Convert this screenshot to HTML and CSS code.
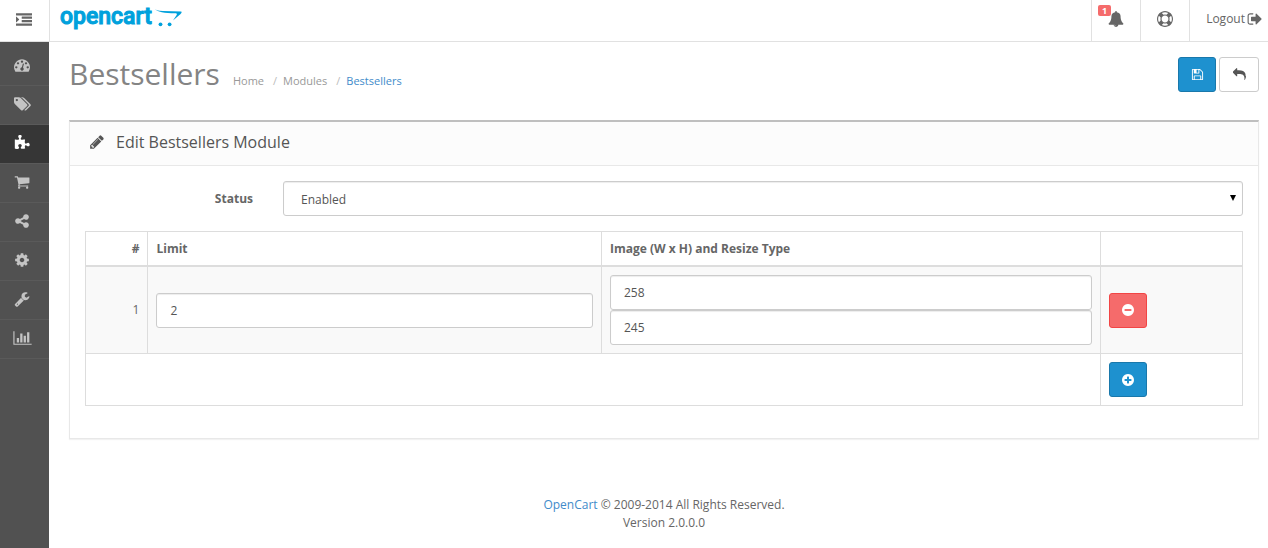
FILE: index.html
```html
<!DOCTYPE html>
<html lang="en">
<head>
<meta charset="utf-8">
<title>Bestsellers</title>
<link rel="stylesheet" href="styles.css">
</head>
<body>
<header class="topbar">
  <button class="menu-toggle" type="button" aria-label="Toggle menu"><svg class="icon icon-16" viewBox="0 0 1792 1792"><path d="M352 832q0 14-9 23l-288 288q-9 9-23 9-13 0-22.500-9.500t-9.500-22.500v-576q0-13 9.500-22.500t22.500-9.500q14 0 23 9l288 288q9 9 9 23zm1440 480v192q0 13-9.500 22.500t-22.500 9.500h-1728q-13 0-22.500-9.500t-9.500-22.500v-192q0-13 9.500-22.500t22.500-9.500h1728q13 0 22.500 9.500t9.500 22.500zm0-384v192q0 13-9.500 22.500t-22.500 9.500h-1088q-13 0-22.500-9.500t-9.500-22.500v-192q0-13 9.500-22.500t22.500-9.500h1088q13 0 22.500 9.500t9.500 22.500zm0-384v192q0 13-9.500 22.500t-22.500 9.500h-1088q-13 0-22.500-9.500t-9.500-22.500v-192q0-13 9.500-22.500t22.500-9.500h1088q13 0 22.500 9.500t9.500 22.500zm0-384v192q0 13-9.500 22.500t-22.500 9.500h-1728q-13 0-22.500-9.500t-9.500-22.500v-192q0-13 9.500-22.500t22.500-9.500h1728q13 0 22.500 9.500t9.500 22.500z"/></svg></button>
  <a class="logo" href="#"><span class="logo-text">opencart</span><svg class="logo-cart" viewBox="0 0 28 20"><path d="M0 0C1 2 4 3 9 3L27 3.400C28.200 3.600 27.600 5 26.600 6L19 12.500L22.500 7.200C23.300 5.600 23 5.400 21 5.300C11 5 3 4.500 0 0Z"/><circle cx="6.500" cy="16.300" r="1.900"/><circle cx="15.600" cy="16.300" r="1.900"/></svg></a>
  <nav class="top-actions" aria-label="Account">
    <a class="top-action" href="#" aria-label="Notifications"><span class="badge">1</span><svg class="icon icon-16" viewBox="0 0 1792 1792"><path d="M912 1696q0-16-16-16-59 0-101.500-42.500t-42.500-101.500q0-16-16-16t-16 16q0 73 51.500 124.500t124.500 51.500q16 0 16-16zm816-288q0 52-38 90t-90 38h-448q0 106-75 181t-181 75-181-75-75-181h-448q-52 0-90-38t-38-90q50-42 91-88t85-119.500 74.500-158.500 50-206 19.500-260q0-152 117-282.500t307-158.500q-8-19-8-39 0-40 28-68t68-28 68 28 28 68q0 20-8 39 190 28 307 158.500t117 282.500q0 139 19.500 260t50 206 74.500 158.500 85 119.500 91 88z"/></svg></a>
    <a class="top-action" href="#" aria-label="Help"><svg class="icon icon-16" viewBox="0 0 1792 1792"><path d="M896 0q182 0 348 71t286 191 191 286 71 348-71 348-191 286-286 191-348 71-348-71-286-191-191-286-71-348 71-348 191-286 286-191 348-71zm0 128q-190 0-361 90l194 194q82-28 167-28t167 28l194-194q-171-90-361-90zm-678 1129l194-194q-28-82-28-167t28-167l-194-194q-90 171-90 361t90 361zm678 407q190 0 361-90l-194-194q-82 28-167 28t-167-28l-194 194q171 90 361 90zm0-384q159 0 271.500-112.500t112.500-271.500-112.500-271.500-271.500-112.500-271.500 112.500-112.500 271.500 112.500 271.500 271.500 112.500zm484-217l194 194q90-171 90-361t-90-361l-194 194q28 82 28 167t-28 167z"/></svg></a>
    <a class="top-action logout" href="#">Logout <svg class="icon icon-16" viewBox="0 0 1792 1792"><path d="M704 1440q0 4 1 20t.5 26.500-3 23.500-10 19.500-20.500 6.500h-320q-119 0-203.500-84.500t-84.500-203.500v-704q0-119 84.500-203.500t203.500-84.500h320q13 0 22.500 9.500t9.500 22.500q0 4 1 20t.5 26.500-3 23.500-10 19.500-20.500 6.500h-320q-66 0-113 47t-47 113v704q0 66 47 113t113 47h312l11.500 1 11.500 3 8 5.500 7 9 2 13.500zm928-544q0 26-19 45l-544 544q-19 19-45 19t-45-19-19-45v-288h-448q-26 0-45-19t-19-45v-384q0-26 19-45t45-19h448v-288q0-26 19-45t45-19 45 19l544 544q19 19 19 45z"/></svg></a>
  </nav>
</header>
<div class="layout">
  <nav class="sidebar" aria-label="Main">
    <a class="side-link" href="#" aria-label="Dashboard"><svg class="icon icon-16" viewBox="0 0 1792 1792"><path d="M384 1152q0-53-37.500-90.500t-90.500-37.500-90.500 37.500-37.500 90.500 37.500 90.500 90.500 37.500 90.500-37.500 37.500-90.500zm192-448q0-53-37.500-90.500t-90.500-37.500-90.500 37.500-37.500 90.500 37.500 90.500 90.500 37.500 90.500-37.500 37.500-90.500zm428 481l101-382q6-26-7.500-48.500t-38.500-29.500-48 6.500-30 39.500l-101 382q-60 5-107 43.500t-63 98.500q-20 77 20 146t117 89 146-20 89-117q16-60-6-117t-72-91zm660-33q0-53-37.500-90.500t-90.500-37.500-90.500 37.500-37.500 90.500 37.500 90.500 90.500 37.500 90.500-37.500 37.500-90.500zm-640-640q0-53-37.500-90.500t-90.500-37.500-90.500 37.500-37.500 90.500 37.500 90.500 90.500 37.500 90.500-37.500 37.500-90.500zm448 192q0-53-37.500-90.500t-90.500-37.500-90.500 37.500-37.500 90.500 37.500 90.500 90.500 37.500 90.500-37.500 37.500-90.500zm320 448q0 261-141 483-19 29-54 29h-1402q-35 0-54-29-141-221-141-483 0-182 71-348t191-286 286-191 348-71 348 71 286 191 191 286 71 348z"/></svg></a>
    <a class="side-link" href="#" aria-label="Catalog"><svg class="icon icon-tags" viewBox="0 0 1920 1792"><path d="M448 448q0-53-37.500-90.500t-90.500-37.500-90.500 37.500-37.500 90.500 37.500 90.500 90.500 37.500 90.500-37.500 37.500-90.500zm1067 576q0 53-37 90l-491 492q-39 37-91 37-53 0-90-37l-715-716q-38-37-64.500-101t-26.500-117v-416q0-52 38-90t90-38h416q53 0 117 26.500t102 64.500l715 714q37 39 37 91zm384 0q0 53-37 90l-491 492q-39 37-91 37-36 0-59-14t-53-45l470-470q37-37 37-90 0-52-37-91l-715-714q-38-38-102-64.500t-117-26.500h224q53 0 117 26.500t102 64.500l715 714q37 39 37 91z"/></svg></a>
    <a class="side-link side-link-active" href="#" aria-label="Extensions"><svg class="icon icon-16" viewBox="0 0 1792 1792"><path d="M1755 1083q0 81-44.500 135t-123.500 54q-41 0-77.500-17.500t-59-38-56.500-38-71-17.500q-110 0-110 124 0 39 16 115t15 115v5q-22 0-33 1-34 3-97.500 11.500t-115.500 13.500-98 5q-61 0-103-26.500t-42-83.500q0-37 17.500-71t38-56.500 38-59 17.500-77.500q0-79-54-123.500t-135-44.500q-84 0-143 45.500t-59 127.500q0 43 15 83t33.500 64.500 33.500 53 15 50.500q0 45-46 89-37 35-117 35-95 0-245-24-9-2-27.500-4t-27.500-4l-13-2q-1 0-3-1-2 0-2-1v-1024q2 1 17.500 3.500t34 5 21.500 3.500q150 24 245 24 80 0 117-35 46-44 46-89 0-22-15-50.500t-33.500-53-33.500-64.500-15-83q0-82 59-127.500t144-45.500q80 0 134 44.500t54 123.500q0 41-17.500 77.500t-38 59-38 56.500-17.500 71q0 57 42 83.500t103 26.500q64 0 180-15t163-17v2q-1 2-3.500 17.500t-5 34-3.500 21.500q-24 150-24 245 0 80 35 117 44 46 89 46 22 0 50.500-15t53-33.500 64.500-33.500 83-15q82 0 127.500 59t45.500 143z"/></svg></a>
    <a class="side-link" href="#" aria-label="Sales"><svg class="icon icon-16" viewBox="0 0 1792 1792"><path d="M704 1536q0 52-38 90t-90 38-90-38-38-90 38-90 90-38 90 38 38 90zm896 0q0 52-38 90t-90 38-90-38-38-90 38-90 90-38 90 38 38 90zm128-1088v512q0 24-16.500 42.500t-40.500 21.500l-1044 122q13 60 13 70 0 16-24 64h920q26 0 45 19t19 45-19 45-45 19h-1024q-26 0-45-19t-19-45q0-11 8-31.500t16-36 21.500-40 15.500-29.500l-177-823h-204q-26 0-45-19t-19-45 19-45 45-19h256q16 0 28.500 6.500t19.500 15.500 13 24.500 8 26 5.500 29.500 4.500 26h1201q26 0 45 19t19 45z"/></svg></a>
    <a class="side-link" href="#" aria-label="Marketing"><svg class="icon icon-16" viewBox="0 0 1792 1792"><path d="M1344 1024q133 0 226.500 93.500t93.500 226.500-93.500 226.500-226.500 93.500-226.500-93.500-93.500-226.500q0-12 2-34l-360-180q-92 86-218 86-133 0-226.500-93.500t-93.500-226.500 93.500-226.500 226.500-93.500q126 0 218 86l360-180q-2-22-2-34 0-133 93.500-226.500t226.500-93.500 226.500 93.500 93.500 226.500-93.500 226.500-226.500 93.500q-126 0-218-86l-360 180q2 22 2 34t-2 34l360 180q92-86 218-86z"/></svg></a>
    <a class="side-link" href="#" aria-label="System"><svg class="icon icon-16" viewBox="0 0 1792 1792"><path d="M1152 896q0-106-75-181t-181-75-181 75-75 181 75 181 181 75 181-75 75-181zm512-109v222q0 12-8 23t-20 13l-185 28q-19 54-39 91 35 50 107 138 10 12 10 25t-9 23q-27 37-99 108t-94 71q-12 0-26-9l-138-108q-44 23-91 38-16 136-29 186-7 28-36 28h-222q-14 0-24.500-8.500t-11.500-21.500l-28-184q-49-16-90-37l-141 107q-10 9-25 9-14 0-25-11-126-114-165-168-7-10-7-23 0-12 8-23 15-21 51-66.500t54-70.500q-27-50-41-99l-183-27q-13-2-21-12.500t-8-23.500v-222q0-12 8-23t19-13l186-28q14-46 39-92-40-57-107-138-10-12-10-24 0-10 9-23 26-36 98.500-107.500t94.500-71.500q13 0 26 10l138 107q44-23 91-38 16-136 29-186 7-28 36-28h222q14 0 24.500 8.500t11.500 21.500l28 184q49 16 90 37l142-107q9-9 24-9 13 0 25 10 129 119 165 170 7 8 7 22 0 12-8 23-15 21-51 66.500t-54 70.500q26 50 41 98l183 28q13 2 21 12.500t8 23.500z"/></svg></a>
    <a class="side-link" href="#" aria-label="Tools"><svg class="icon icon-16" viewBox="0 0 1792 1792"><path d="M448 1472q0-26-19-45t-45-19-45 19-19 45 19 45 45 19 45-19 19-45zm644-420l-682 682q-37 37-90 37-52 0-91-37l-106-108q-38-36-38-90 0-53 38-91l681-681q39 98 114.500 173.500t173.500 114.500zm634-435q0 39-23 106-47 134-164.500 217.500t-258.500 83.500q-185 0-316.500-131.500t-131.500-316.500 131.500-316.500 316.500-131.500q58 0 121.500 16.500t107.500 46.500q16 11 16 28t-16 28l-293 169v224l193 107q5-3 79-48.500t135.500-81 70.500-35.500q15 0 23.500 10t8.500 25z"/></svg></a>
    <a class="side-link" href="#" aria-label="Reports"><svg class="icon icon-chart" viewBox="0 0 2048 1792"><path d="M640 896v512h-256v-512h256zm384-512v1024h-256v-1024h256zm1024 1152v128h-2048v-1536h128v1408h1920zm-640-896v768h-256v-768h256zm384-384v1152h-256v-1152h256z"/></svg></a>
  </nav>
  <div class="content">
    <div class="page-header">
      <h1 class="page-title">Bestsellers</h1>
      <ol class="breadcrumb">
        <li><a href="#">Home</a></li>
        <li><a href="#">Modules</a></li>
        <li><a class="current" href="#">Bestsellers</a></li>
      </ol>
      <div class="page-buttons">
        <button class="btn btn-primary" type="submit" form="module-form" aria-label="Save"><svg class="icon icon-13" viewBox="0 0 1792 1792"><path d="M512 1536h768v-384h-768v384zm896 0h128v-896q0-14-10-38.500t-20-34.500l-281-281q-10-10-34-20t-39-10v416q0 40-28 68t-68 28h-576q-40 0-68-28t-28-68v-416h-128v1280h128v-416q0-40 28-68t68-28h832q40 0 68 28t28 68v416zm-384-928v-320q0-13-9.500-22.500t-22.500-9.500h-192q-13 0-22.500 9.500t-9.500 22.500v320q0 13 9.500 22.500t22.500 9.500h192q13 0 22.500-9.500t9.500-22.500zm640 32v928q0 40-28 68t-68 28h-1344q-40 0-68-28t-28-68v-1344q0-40 28-68t68-28h928q40 0 88 20t76 48l280 280q28 28 48 76t20 88z"/></svg></button>
        <a class="btn btn-default" href="#" aria-label="Cancel"><svg class="icon icon-13" viewBox="0 0 1792 1792"><path d="M1792 1120q0 166-127 451-3 7-10.500 24t-13.500 30-13 22q-12 17-28 17-15 0-23.500-10t-8.500-25q0-9 2.500-26.500t2.500-23.500q5-68 5-123 0-112-19.500-200.500t-54-153.500-89-112-117-78.500-144-49-164-24-185.500-7.500h-224v256q0 26-19 45t-45 19-45-19l-512-512q-19-19-19-45t19-45l512-512q19-19 45-19t45 19 19 45v256h224q713 0 875 403 53 134 53 333z"/></svg></a>
      </div>
    </div>
    <section class="panel">
      <h2 class="panel-heading"><svg class="icon icon-16" viewBox="0 0 1792 1792"><path d="M491 1536l91-91-235-235-91 91v107h128v128h107zm523-928q0-22-22-22-10 0-17 7l-542 542q-7 7-7 17 0 22 22 22 10 0 17-7l542-542q7-7 7-17zm-54-192l416 416-832 832h-416v-416zm683 96q0 53-37 90l-166 166-416-416 166-165q36-38 90-38 53 0 91 38l235 234q37 39 37 91z"/></svg><span>Edit Bestsellers Module</span></h2>
      <form class="panel-body" id="module-form">
        <div class="form-row">
          <label class="form-label" for="status">Status</label>
          <div class="select-wrap">
            <select class="field" id="status"><option selected>Enabled</option><option>Disabled</option></select>
            <svg class="select-arrow" viewBox="0 0 6 6"><path d="M0 0H6L3 6Z"/></svg>
          </div>
        </div>
        <table class="table">
          <colgroup><col class="col-number"><col class="col-limit"><col class="col-image"><col></colgroup>
          <thead>
            <tr><th class="number">#</th><th>Limit</th><th>Image (W x H) and Resize Type</th><th></th></tr>
          </thead>
          <tbody>
            <tr class="striped">
              <td class="number">1</td>
              <td><input class="field" type="text" value="2" aria-label="Limit"></td>
              <td><input class="field" type="text" value="258" aria-label="Width"><input class="field" type="text" value="245" aria-label="Height"></td>
              <td><button class="btn btn-danger" type="button" aria-label="Remove"><svg class="icon icon-14" viewBox="0 0 1792 1792"><path d="M1344 960v-128q0-26-19-45t-45-19h-768q-26 0-45 19t-19 45v128q0 26 19 45t45 19h768q26 0 45-19t19-45zm320-64q0 209-103 385.500t-279.500 279.500-385.500 103-385.500-103-279.500-279.500-103-385.500 103-385.500 279.500-279.500 385.500-103 385.500 103 279.500 279.500 103 385.500z"/></svg></button></td>
            </tr>
            <tr>
              <td colspan="3"></td>
              <td><button class="btn btn-primary" type="button" aria-label="Add"><svg class="icon icon-14" viewBox="0 0 1792 1792"><path d="M1344 960v-128q0-26-19-45t-45-19h-256v-256q0-26-19-45t-45-19h-128q-26 0-45 19t-19 45v256h-256q-26 0-45 19t-19 45v128q0 26 19 45t45 19h256v256q0 26 19 45t45 19h128q26 0 45-19t19-45v-256h256q26 0 45-19t19-45zm320-64q0 209-103 385.500t-279.500 279.500-385.500 103-385.500-103-279.500-279.500-103-385.500 103-385.500 279.500-279.500 385.500-103 385.500 103 279.500 279.500 103 385.500z"/></svg></button></td>
            </tr>
          </tbody>
        </table>
      </form>
    </section>
    <footer class="footer"><a href="#">OpenCart</a> © 2009-2014 All Rights Reserved.<br>Version 2.0.0.0</footer>
  </div>
</div>
</body>
</html>
```
FILE: styles.css
```css
* { box-sizing: border-box; }

body {
  margin: 0;
  min-height: 100vh;
  display: flex;
  flex-direction: column;
  background: #fff;
  color: #666;
  font: 12px/18px "Open Sans", sans-serif;
}

a { color: #428bca; text-decoration: none; }

.icon { display: block; flex: none; fill: currentColor; }
.icon-13 { width: 13px; height: 13px; }
.icon-14 { width: 14px; height: 14px; }
.icon-16 { width: 16px; height: 16px; }
.icon-tags { width: 17px; height: 16px; }
.icon-chart { width: 19px; height: 16px; }

.topbar {
  display: flex;
  height: 42px;
  border-bottom: 1px solid #e1e1e1;
}

.menu-toggle {
  display: flex;
  align-items: center;
  justify-content: center;
  width: 50px;
  padding: 0 2px 2px 0;
  border: 0;
  border-right: 1px solid #e1e1e1;
  background: none;
  color: #666;
}

.logo {
  display: flex;
  align-items: flex-start;
  gap: 2px;
  padding: 4px 0 0 10px;
  color: #00a1dc;
}

.logo-text {
  font: 500 23px/26px Roboto, sans-serif;
  -webkit-text-stroke: 1px #00a1dc;
}

.logo-cart {
  width: 28px;
  height: 20px;
  margin-top: 4px;
  fill: #00a1dc;
}

.top-actions { display: flex; margin-left: auto; }

.top-action {
  position: relative;
  display: flex;
  align-items: center;
  justify-content: center;
  gap: 2px;
  width: 49px;
  padding-bottom: 3px;
  border-left: 1px solid #e1e1e1;
  color: #666;
}

.logout { width: auto; padding-left: 16px; padding-right: 5px; }

.badge {
  position: absolute;
  top: 5px;
  left: 6px;
  width: 13px;
  border-radius: 2px;
  background: #f56b6b;
  color: #fff;
  font-size: 9px;
  font-weight: 700;
  line-height: 11px;
  text-align: center;
}

.layout { display: flex; flex: 1; }

.sidebar {
  width: 49px;
  flex: none;
  padding-top: 5px;
  background: #515151;
}

.side-link {
  display: flex;
  align-items: center;
  justify-content: center;
  height: 39px;
  padding: 0 5px 2px 0;
  border-bottom: 1px solid #5a5a5a;
  color: #c4c4c4;
}

.side-link-active { background: #363636; color: #fff; }

.content { flex: 1; padding: 15px 9px 0 20px; }

.page-header {
  display: flex;
  align-items: baseline;
  height: 63px;
}

.page-title {
  margin: 0;
  color: #848484;
  font-size: 30px;
  font-weight: 400;
  line-height: 34px;
}

.breadcrumb {
  display: flex;
  margin: 0;
  padding: 0 0 0 13px;
  list-style: none;
  font-size: 11px;
}

.breadcrumb li + li::before { content: "/"; padding: 0 6px 0 9px; color: #bbb; }
.breadcrumb a { color: #999; }
.breadcrumb .current { color: #428bca; }

.page-buttons {
  display: flex;
  align-self: flex-start;
  gap: 3px;
  margin-left: auto;
}

.btn {
  display: flex;
  align-items: center;
  justify-content: center;
  width: 38px;
  height: 35px;
  padding: 0;
  border: 1px solid;
  border-radius: 3px;
}

.btn-primary { background: #1e91cf; border-color: #1978ab; color: #fff; }
.btn-danger { background: #f56b6b; border-color: #f24545; color: #fff; }
.btn-default { width: 40px; background: #fff; border-color: #ccc; color: #555; }

.panel {
  border: 1px solid #e8e8e8;
  border-top: 2px solid #bfbfbf;
  box-shadow: 0 1px 1px rgba(0, 0, 0, 0.05);
}

.panel-heading {
  display: flex;
  align-items: center;
  gap: 11px;
  height: 44px;
  margin: 0;
  padding: 0 19px 4px;
  border-bottom: 1px solid #e8e8e8;
  background: #fcfcfc;
  color: #555;
  font-size: 16px;
  font-weight: 400;
}

.panel-body { padding: 15px 15px 32px; }

.form-row {
  display: flex;
  align-items: center;
  gap: 30px;
  margin-bottom: 15px;
}

.form-label { flex: 0 0 168px; font-weight: 700; text-align: right; }

.select-wrap { position: relative; flex: 1; }

.field {
  display: block;
  width: 100%;
  height: 35px;
  padding: 0 13px;
  border: 1px solid #ccc;
  border-radius: 3px;
  background: #fff;
  box-shadow: inset 0 1px 1px rgba(0, 0, 0, 0.075);
  color: #555;
  font: inherit;
}

select.field { padding: 2px 17px 0; appearance: none; }

.select-arrow {
  position: absolute;
  top: 14px;
  right: 7px;
  width: 6px;
  height: 6px;
  pointer-events: none;
}

.table {
  width: 100%;
  table-layout: fixed;
  border-collapse: collapse;
}

.col-number { width: 5.4%; }
.col-limit { width: 39.2%; }
.col-image { width: 43.1%; }

.table th, .table td {
  padding: 8px;
  border: 1px solid #ddd;
  text-align: left;
  vertical-align: middle;
}

.table th { padding-bottom: 7px; border-bottom-width: 2px; font-weight: 700; }
.table .number { text-align: right; }
.striped { background: #f9f9f9; }

.footer { padding-top: 57px; text-align: center; }
```
